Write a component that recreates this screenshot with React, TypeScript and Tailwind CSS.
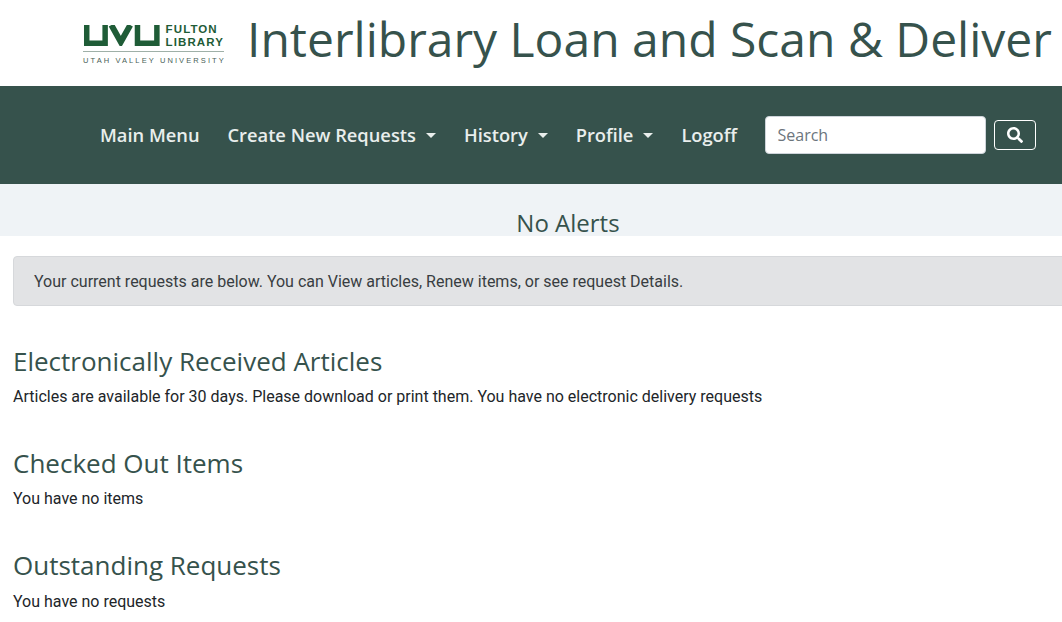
import { FaSearch } from "react-icons/fa";

const NAV_ITEMS = [
  { label: "Main Menu", caret: false },
  { label: "Create New Requests", caret: true },
  { label: "History", caret: true },
  { label: "Profile", caret: true },
  { label: "Logoff", caret: false },
];

const SECTIONS = [
  {
    title: "Electronically Received Articles",
    body: "Articles are available for 30 days. Please download or print them. You have no electronic delivery requests",
    gap: "mb-[8px]",
  },
  { title: "Checked Out Items", body: "You have no items", gap: "mb-[8px]" },
  { title: "Outstanding Requests", body: "You have no requests", gap: "mb-[9px]" },
];

function Logo() {
  return (
    <div className="w-[141px] shrink-0">
      <div className="flex items-center gap-[5px] h-[24px]">
        <svg width="78" height="21" viewBox="0 0 78 21" fill="none" stroke="#1f5c37" strokeWidth="5.5" aria-hidden="true">
          <path d="M3.75 0V18.25H22.25V0" />
          <path d="M28.5 0L38 17L47.5 0" strokeWidth="6" />
          <path d="M54.75 0V18.25H74.25V0" />
        </svg>
        <div className="pt-[2px] text-[#1f5c37] font-['Liberation_Sans',sans-serif] font-bold text-[11.5px] leading-[13px] tracking-[1.1px]">
          <div>FULTON</div>
          <div>LIBRARY</div>
        </div>
      </div>
      <div className="mt-[4px] pt-[4px] border-t border-[#9fb0a8] text-[#4a5f57] font-['Liberation_Sans',sans-serif] text-[7.5px] leading-[10px] tracking-[2.1px] whitespace-nowrap">
        UTAH VALLEY UNIVERSITY
      </div>
    </div>
  );
}

export default function App() {
  return (
    <div className="w-[1062px] h-[622px] overflow-hidden bg-white font-['Roboto',sans-serif] text-[#212529]">
      <header className="h-[86px] flex items-start pl-[83px] gap-[23px]">
        <div className="pt-[23px]">
          <Logo />
        </div>
        <h1 className="pt-[10px] font-['Open_Sans',sans-serif] text-[48px] leading-[58px] text-[#36524c] whitespace-nowrap">
          Interlibrary Loan and Scan &amp; Deliver
        </h1>
      </header>

      <nav className="h-[98px] bg-[#36524c] flex items-center pl-[86px]">
        {NAV_ITEMS.map((item) => (
          <a
            key={item.label}
            href="#"
            className="px-[14px] pb-[2px] flex items-center font-['Open_Sans',sans-serif] font-semibold text-[18.3px] leading-[27px] text-[#e9eeec] whitespace-nowrap"
          >
            {item.label}
            {item.caret && (
              <span className="ml-[10px] mt-[2px] w-0 h-0 border-x-[5px] border-x-transparent border-t-[5px] border-t-[#e9eeec]" />
            )}
          </a>
        ))}
        <input
          placeholder="Search"
          className="ml-[13.5px] w-[221px] h-[38px] px-3 rounded bg-white border border-[#ced4da] font-['Open_Sans',sans-serif] text-[16px] text-[#495057] placeholder:text-[#6c757d]"
        />
        <button className="ml-2 w-[42px] h-[30px] flex items-center justify-center rounded border border-white text-white">
          <FaSearch size={16} />
        </button>
      </nav>

      <div className="h-[52px] bg-[#eff3f6]">
        <div className="ml-[13px] w-[1110px] pt-[24px] text-center font-['Open_Sans',sans-serif] text-[24px] leading-[29px] text-[#36524c]">
          No Alerts
        </div>
      </div>

      <main className="ml-[13px] w-[1110px] pt-5">
        <div className="h-[50px] pt-px flex items-center px-5 bg-[#e2e3e5] border border-[#d6d8db] rounded text-[#383d41] text-[16px]">
          Your current requests are below. You can View articles, Renew items, or see request Details.
        </div>
        <div className="pt-[40px] flex flex-col gap-[39px]">
          {SECTIONS.map((s) => (
            <section key={s.title}>
              <h2 className={`font-['Open_Sans',sans-serif] text-[26px] leading-[31px] text-[#36524c] ${s.gap}`}>
                {s.title}
              </h2>
              <p className="text-[16px] leading-[24px]">{s.body}</p>
            </section>
          ))}
        </div>
      </main>
    </div>
  );
}
